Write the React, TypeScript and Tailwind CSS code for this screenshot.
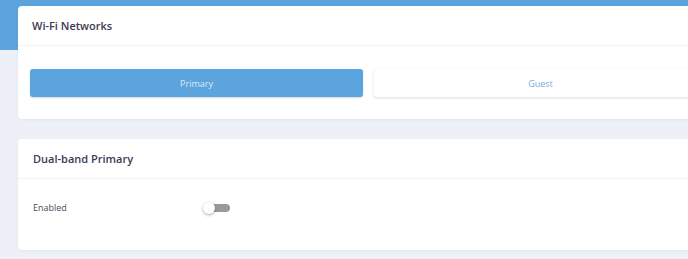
import React from "react";

export default function App() {
  return (
    <div
      className="w-[688px] h-[259px] overflow-hidden bg-[linear-gradient(to_bottom,#5ca4dd_50px,#edf0f7_50px)]"
      style={{ fontFamily: '"Open Sans", "Noto Sans", sans-serif' }}
    >
      <div className="pt-[6px] pl-[18px] flex flex-col gap-[20px] w-[719px]">
        <div className="bg-white rounded-[4px] shadow-[0_1px_3px_rgba(60,70,110,0.06)] h-[113px] flex flex-col">
          <div className="h-[40px] border-b border-[#f1f2f6] flex items-center pl-[14px] pt-[2px]">
            <span className="text-[11px] font-semibold text-[#3a3a52]">Wi-Fi Networks</span>
          </div>
          <div className="flex gap-[11px] px-[12px] pt-[23px]">
            <button className="flex-1 h-[28px] pt-[1px] rounded-[3px] bg-[#5ca4de] text-[#d9eaf8] text-[9px] shadow-[0_1px_2px_rgba(40,60,100,0.2)]">
              Primary
            </button>
            <button className="flex-1 h-[28px] pt-[1px] rounded-[3px] bg-white text-[#72ade2] text-[9px] shadow-[0_1px_3px_rgba(40,60,100,0.18)]">
              Guest
            </button>
          </div>
        </div>
        <div className="bg-white rounded-[4px] shadow-[0_1px_3px_rgba(60,70,110,0.06)] h-[111px] flex flex-col">
          <div className="h-[40px] border-b border-[#f1f2f6] flex items-center pl-[15px] pt-[1px]">
            <span className="text-[11px] font-semibold text-[#3a3a52]">Dual-band Primary</span>
          </div>
          <div className="flex items-center pl-[15px] pt-[22px]">
            <span className="w-[170px] text-[9px] text-[#4a4a5e]">Enabled</span>
            <div className="relative w-[27px] h-[14px] flex items-center">
              <div className="ml-[6px] w-[21px] h-[8px] rounded-full bg-[#9a9a9a]" />
              <div className="absolute left-0 top-[1px] w-[12px] h-[12px] rounded-full bg-white shadow-[0_1px_3px_rgba(0,0,0,0.35)]" />
            </div>
          </div>
        </div>
      </div>
    </div>
  );
}
